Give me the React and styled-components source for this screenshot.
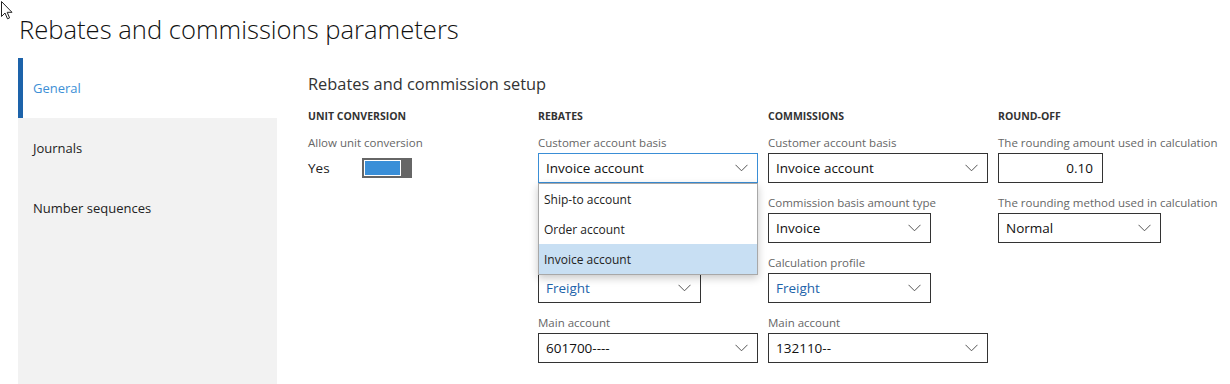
import React from "react";
import styled, { createGlobalStyle, css } from "styled-components";

const GlobalStyle = createGlobalStyle`
  html, body {
    margin: 0;
    padding: 0;
    background: #fff;
  }
  body {
    font-family: "Segoe UI", "Open Sans", "Liberation Sans", sans-serif;
    color: #222;
  }
`;

const blue = "#1d63aa";

const Page = styled.div`
  position: relative;
  height: 384px;
  overflow: hidden;
  padding-left: 18px;
`;

const Cursor = styled.svg`
  position: absolute;
  top: 1px;
  left: 1px;
`;

const Title = styled.h1`
  margin: 0;
  padding: 12px 0 0 1px;
  height: 58px;
  box-sizing: border-box;
  font-size: 25.6px;
  line-height: 36px;
  font-weight: 300;
  color: #111;
`;

const Body = styled.div`
  display: flex;
  height: 326px;
`;

const Nav = styled.nav`
  width: 259px;
  flex-shrink: 0;
  background: #f2f2f2;
`;

const NavItem = styled.div`
  height: 60px;
  display: flex;
  align-items: center;
  box-sizing: border-box;
  padding-left: 15px;
  font-size: 13px;
  color: #222;
  ${(p) =>
    p.$active &&
    css`
      background: #fff;
      border-left: 5px solid ${blue};
      padding-left: 10px;
      color: #3d8fd6;
    `}
`;

const Content = styled.main`
  flex: 1;
  padding: 14px 0 0 31px;
`;

const SectionTitle = styled.h2`
  margin: 0;
  font-size: 16.4px;
  line-height: 24px;
  font-weight: 400;
  color: #333;
`;

const Columns = styled.div`
  display: grid;
  grid-template-columns: repeat(4, 230px);
  margin-top: 13px;
`;

const Column = styled.section`
  display: flex;
  flex-direction: column;
  gap: 10px;
`;

const Header = styled.h3`
  margin: 0;
  font-size: 10.5px;
  line-height: 14px;
  font-weight: 700;
  color: #333;
  text-transform: uppercase;
`;

const Field = styled.div`
  position: relative;
  display: flex;
  flex-direction: column;
  visibility: ${(p) => (p.$covered ? "hidden" : "visible")};
`;

const Label = styled.label`
  font-size: 11.5px;
  line-height: 20px;
  color: #666;
  white-space: nowrap;
  visibility: ${(p) => (p.$covered ? "hidden" : "inherit")};
`;

const Box = styled.div`
  width: ${(p) => p.$width}px;
  height: 30px;
  box-sizing: border-box;
  border: 1px solid ${(p) => (p.$focused ? "#3a8ed6" : "#333")};
  display: flex;
  align-items: center;
  justify-content: ${(p) => (p.$number ? "flex-end" : "space-between")};
  padding: 0 9px 0 7px;
  font-size: 13.5px;
  color: ${(p) => (p.$link ? "#1d63aa" : "#111")};
  background: #fff;
`;

const Chevron = () => (
  <svg width="13" height="8" viewBox="0 0 13 8">
    <path d="M0.5 0.8 L6.5 6.8 L12.5 0.8" fill="none" stroke="#555" strokeWidth="1" />
  </svg>
);

const Popup = styled.ul`
  position: absolute;
  top: 50px;
  left: 0;
  z-index: 2;
  width: 220px;
  margin: 0;
  padding: 0;
  list-style: none;
  box-sizing: border-box;
  background: #fff;
  border: 1px solid #a8a8a8;
  box-shadow: 0 3px 8px rgba(0, 0, 0, 0.22);
`;

const Option = styled.li`
  height: 30px;
  display: flex;
  align-items: center;
  padding-left: 5px;
  font-size: 12px;
  color: #222;
  background: ${(p) => (p.$selected ? "#c8dff3" : "#fff")};
`;

const ToggleRow = styled.div`
  height: 30px;
  display: flex;
  align-items: center;
  font-size: 13.5px;
  color: #222;
`;

const ToggleText = styled.span`
  width: 54px;
`;

const Track = styled.div`
  width: 50px;
  height: 20px;
  box-sizing: border-box;
  background: #666;
  padding: 2px 11px 2px 2px;
`;

const Fill = styled.div`
  height: 100%;
  box-sizing: border-box;
  border: 1px solid #fff;
  background: #3a8fd8;
`;

const Select = ({ label, value, width = 220, focused, link, number, covered, labelCovered, children }) => (
  <Field $covered={covered}>
    <Label $covered={labelCovered}>{label}</Label>
    <Box $width={width} $focused={focused} $link={link} $number={number}>
      <span>{value}</span>
      {!number && <Chevron />}
    </Box>
    {children}
  </Field>
);

const App = () => (
  <>
    <GlobalStyle />
    <Page>
      <Cursor width="12" height="19" viewBox="0 0 12 19">
        <path d="M0.5 0.5 L0.5 15.5 L4 12 L6.5 17.8 L8.6 16.9 L6.2 11.3 L11 11.3 Z" fill="#fff" stroke="#222" strokeWidth="1" />
      </Cursor>
      <Title>Rebates and commissions parameters</Title>
      <Body>
        <Nav>
          <NavItem $active>General</NavItem>
          <NavItem>Journals</NavItem>
          <NavItem>Number sequences</NavItem>
        </Nav>
        <Content>
          <SectionTitle>Rebates and commission setup</SectionTitle>
          <Columns>
            <Column>
              <Header>Unit conversion</Header>
              <Field>
                <Label>Allow unit conversion</Label>
                <ToggleRow>
                  <ToggleText>Yes</ToggleText>
                  <Track>
                    <Fill />
                  </Track>
                </ToggleRow>
              </Field>
            </Column>
            <Column>
              <Header>Rebates</Header>
              <Select label="Customer account basis" value="Invoice account" focused>
                <Popup>
                  <Option>Ship-to account</Option>
                  <Option>Order account</Option>
                  <Option $selected>Invoice account</Option>
                </Popup>
              </Select>
              {/* these two sit under the open list */}
              <Select label="Rebate basis amount type" value="Invoice" width={163} covered />
              <Select label="Calculation profile" value="Freight" width={163} link labelCovered />
              <Select label="Main account" value="601700----" />
            </Column>
            <Column>
              <Header>Commissions</Header>
              <Select label="Customer account basis" value="Invoice account" />
              <Select label="Commission basis amount type" value="Invoice" width={163} />
              <Select label="Calculation profile" value="Freight" width={163} link />
              <Select label="Main account" value="132110--" />
            </Column>
            <Column>
              <Header>Round-off</Header>
              <Select label="The rounding amount used in calculation" value="0.10" width={105} number />
              <Select label="The rounding method used in calculation" value="Normal" width={163} />
            </Column>
          </Columns>
        </Content>
      </Body>
    </Page>
  </>
);

export default App;
